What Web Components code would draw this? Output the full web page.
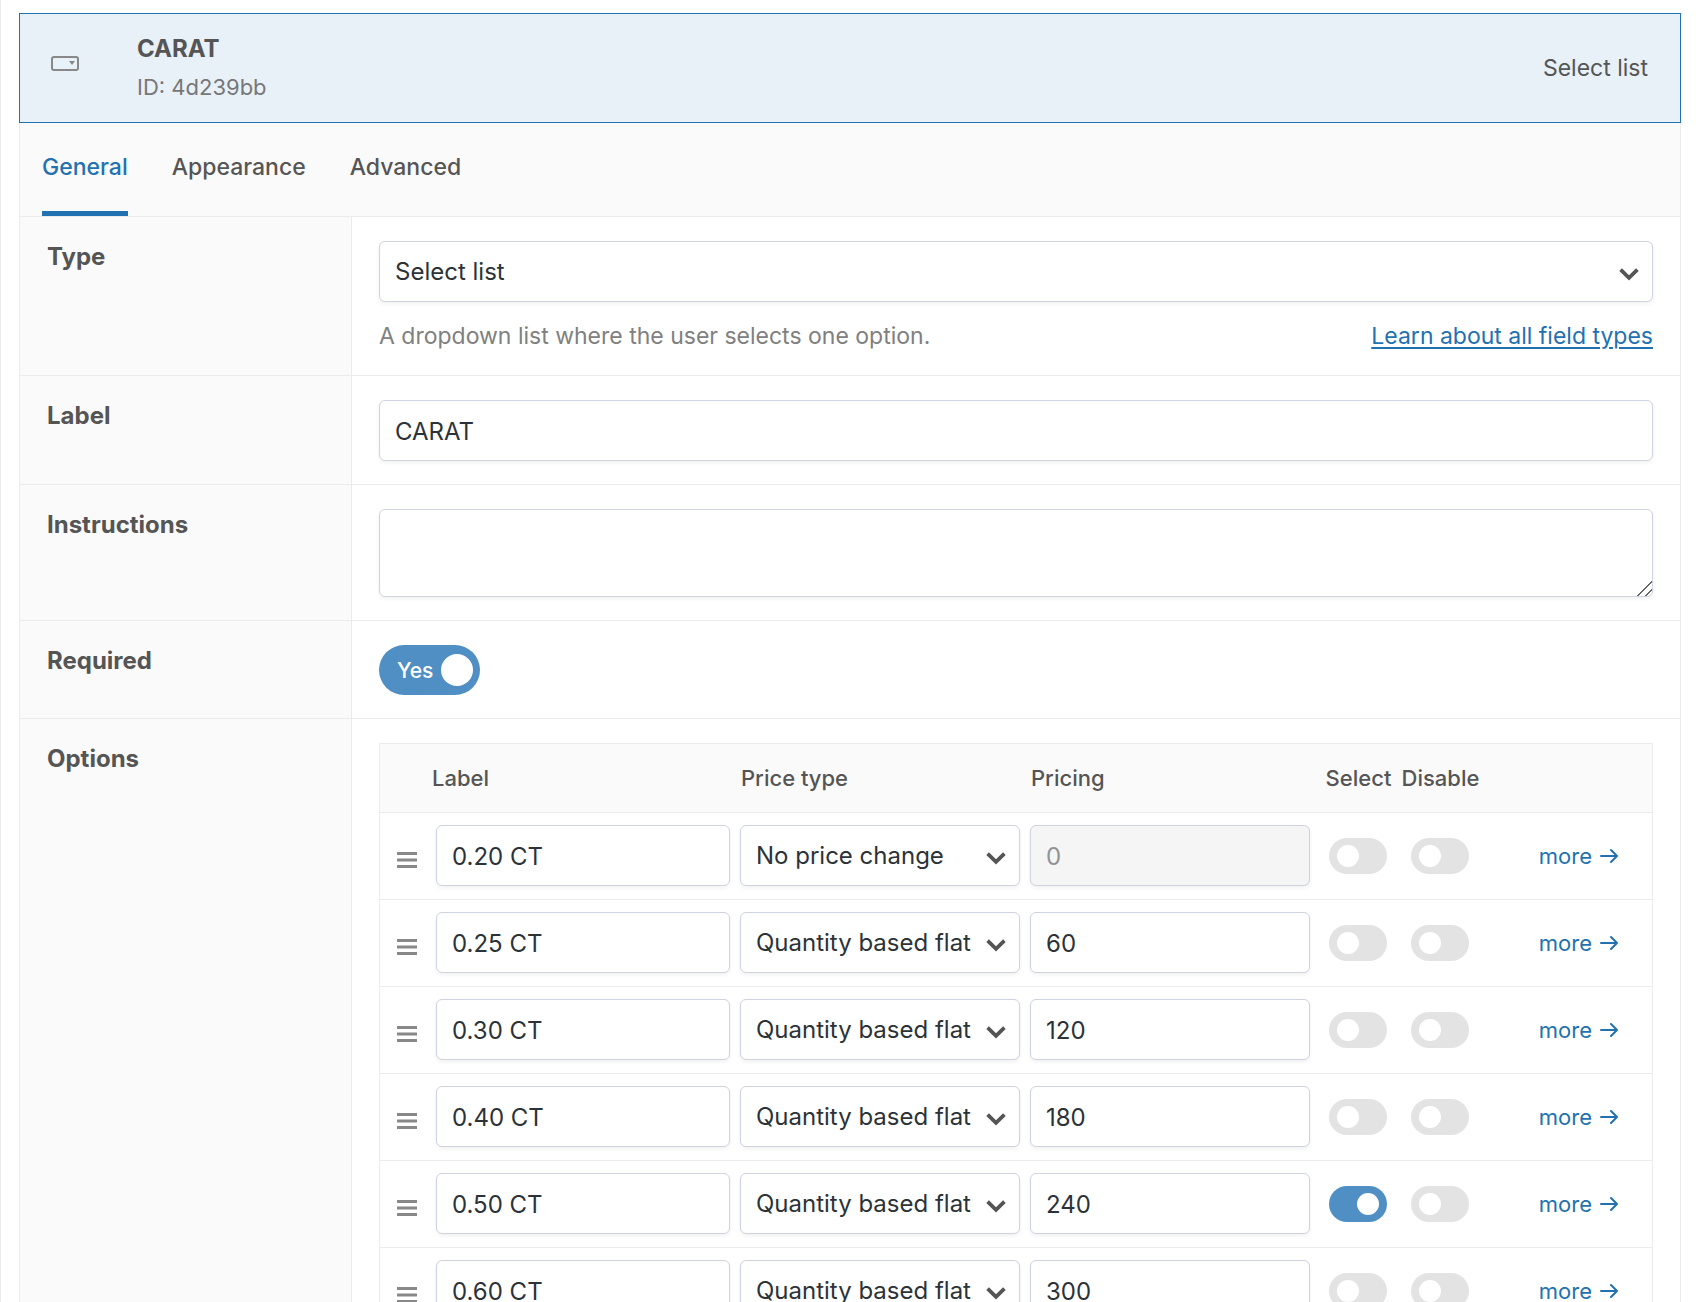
<!DOCTYPE html>
<html lang="en">
<head>
<meta charset="utf-8">
<meta name="viewport" content="width=device-width, initial-scale=1">
<title>Field settings</title>
<style>
  body {
    margin: 0;
    background: #fff;
    color: #555;
    font-family: Inter, "Liberation Sans", sans-serif;
    font-size: 23px;
    line-height: 32px;
  }
</style>
</head>
<body>
<field-editor>
  <field-header slot="header" field-id="4d239bb" type="Select list">CARAT</field-header>
  <field-tabs slot="tabs" items="General,Appearance,Advanced" current="General"></field-tabs>
  <select-setting label="Type" value="Select list">
    A dropdown list where the user selects one option.
    <a slot="link" href="#field-types">Learn about all field types</a>
  </select-setting>
  <text-setting label="Label" value="CARAT"></text-setting>
  <textarea-setting label="Instructions"></textarea-setting>
  <switch-setting label="Required"></switch-setting>
  <options-setting label="Options"></options-setting>
</field-editor>

<script>
// styles shared by every element that holds form controls
const controlStyles = `
  * { box-sizing: border-box; }
  input, select, textarea, button {
    margin: 0;
    font: inherit;
    color: inherit;
  }
  .box {
    display: block;
    width: 100%;
    height: 61px;
    padding: 0 15px;
    border: 1px solid #ced3df;
    border-radius: 6px;
    background: #fff;
    box-shadow: 0 2px 4px rgba(0, 0, 0, .06);
    color: #2c3338;
    font-size: 24px;
    line-height: 32px;
  }
  input.box { padding-top: 2px; }
  .box:disabled {
    background: #f5f5f5;
    color: #8f9396;
    opacity: 1;
  }
  .select { display: grid; }
  .select > * { grid-area: 1 / 1; }
  .select .box {
    appearance: none;
    padding-right: 40px;
  }
  .select svg {
    place-self: center end;
    margin: 4px 10px 0 0;
    pointer-events: none;
  }
  .toggle {
    appearance: none;
    display: block;
    width: 58px;
    height: 36px;
    padding: 7px 8px;
    border-radius: 18px;
    background: #e3e3e3;
  }
  .toggle::before {
    content: "";
    display: block;
    width: 22px;
    height: 22px;
    border-radius: 50%;
    background: #fff;
  }
  .toggle:checked { background: #4f8fc3; }
  .toggle:checked::before { margin-left: auto; }
`;

const selectMarkup = (value, attrs) => `
  <div class="select">
    <select class="box" ${attrs}><option>${value}</option></select>
    <svg width="28" height="28" viewBox="0 0 20 20" aria-hidden="true">
      <path d="M4 6.900l6 5.800 6-5.800" fill="none" stroke="#555" stroke-width="2.700" />
    </svg>
  </div>
`;

class FieldEditor extends HTMLElement {
  constructor() {
    super();
    this.attachShadow({ mode: "open" }).innerHTML = `
      <style>
        :host {
          display: block;
          box-sizing: border-box;
          min-height: 100vh;
          padding: 13px 15px 0 18px;
          border-left: 1px solid #ebebeb;
        }
        .body {
          border: solid #ebebeb;
          border-width: 0 1px;
        }
      </style>
      <slot name="header"></slot>
      <div class="body">
        <slot name="tabs"></slot>
        <slot></slot>
      </div>
    `;
  }
}

class FieldHeader extends HTMLElement {
  connectedCallback() {
    this.attachShadow({ mode: "open" }).innerHTML = `
      <style>
        :host {
          display: grid;
          grid-template-columns: 86px 1fr auto;
          box-sizing: border-box;
          height: 110px;
          padding: 15px 32px 0 31px;
          border: 1px solid #2271b1;
          background: #e8f0f8;
        }
        svg { margin-top: 27px; }
        .name, .id { line-height: 39px; }
        .name {
          font-size: 24px;
          font-weight: 700;
        }
        .id {
          color: #777;
          font-size: 22px;
        }
        .type { line-height: 78px; }
      </style>
      <svg width="28" height="16" viewBox="0 0 28 16" aria-hidden="true">
        <rect x="1" y="1" width="26" height="13" rx="2" fill="none" stroke="#888" stroke-width="2" />
        <path d="M18 5h6l-3 4z" fill="#888" />
      </svg>
      <div>
        <div class="name"><slot></slot></div>
        <div class="id">ID: ${this.getAttribute("field-id")}</div>
      </div>
      <div class="type">${this.getAttribute("type")}</div>
    `;
  }
}

class FieldTabs extends HTMLElement {
  connectedCallback() {
    const current = this.getAttribute("current");
    this.attachShadow({ mode: "open" }).innerHTML = `
      <style>
        :host {
          display: block;
          padding: 0 22px;
          border-bottom: 1px solid #ebebeb;
          background: #fafafa;
        }
        nav { display: flex; gap: 44px; }
        button {
          height: 93px;
          padding: 0;
          border: solid transparent;
          border-width: 0 0 5px;
          background: none;
          color: #555;
          font: inherit;
          font-weight: 500;
        }
        button[aria-selected="true"] {
          border-color: #2271b1;
          color: #2271b1;
        }
      </style>
      <nav role="tablist">
        ${this.getAttribute("items").split(",").map((name) =>
          `<button type="button" role="tab" aria-selected="${name === current}">${name}</button>`
        ).join("")}
      </nav>
    `;
  }
}

/* Label column on the left, a control on the right. Subclasses supply the control. */
class FieldSetting extends HTMLElement {
  connectedCallback() {
    this.attachShadow({ mode: "open" }).innerHTML = `
      <style>
        ${controlStyles}
        :host {
          display: grid;
          grid-template-columns: 332px minmax(0, 1fr);
          border-bottom: 1px solid #ebebeb;
        }
        :host(:last-child) { border-bottom: 0; }
        .title {
          padding: 24px 27px;
          border-right: 1px solid #ebebeb;
          background: #fafafa;
          font-size: 24px;
          font-weight: 700;
        }
        .control { padding: 24px 27px 23px; }
        ${this.styles()}
      </style>
      <div class="title">${this.heading()}</div>
      <div class="control">${this.control()}</div>
    `;
  }

  heading() {
    return `<label for="control">${this.getAttribute("label")}</label>`;
  }

  styles() {
    return "";
  }
}

class SelectSetting extends FieldSetting {
  styles() {
    return `
      .help {
        display: flex;
        justify-content: space-between;
        padding-top: 18px;
        color: #808080;
      }
      ::slotted(a) { color: #2271b1; text-underline-offset: 3px; }
    `;
  }

  control() {
    return `
      ${selectMarkup(this.getAttribute("value"), 'id="control"')}
      <div class="help"><span><slot></slot></span><slot name="link"></slot></div>
    `;
  }
}

class TextSetting extends FieldSetting {
  control() {
    return `<input class="box" id="control" type="text" value="${this.getAttribute("value")}">`;
  }
}

class TextareaSetting extends FieldSetting {
  styles() {
    return `
      textarea.box { height: 88px; resize: vertical; }
      textarea::-webkit-resizer {
        background: linear-gradient(135deg,
          transparent 47%, #666 47%, #666 54%, transparent 54%,
          transparent 76%, #666 76%, #666 83%, transparent 83%);
      }
    `;
  }

  control() {
    return '<textarea class="box" id="control"></textarea>';
  }
}

class SwitchSetting extends FieldSetting {
  styles() {
    return `
      .switch { display: inline-grid; vertical-align: top; }
      .switch > * { grid-area: 1 / 1; }
      .switch span {
        align-self: center;
        padding: 2px 0 0 18px;
        color: #fff;
        font-size: 21px;
        font-weight: 500;
        pointer-events: none;
      }
      .switch .toggle {
        width: 101px;
        height: 50px;
        padding: 9px 7px;
        border-radius: 25px;
      }
      .switch .toggle::before { width: 32px; height: 32px; }
    `;
  }

  control() {
    return `
      <label class="switch">
        <input class="toggle" id="control" type="checkbox" checked>
        <span>Yes</span>
      </label>
    `;
  }
}

class OptionsSetting extends FieldSetting {
  heading() {
    return this.getAttribute("label");
  }

  control() {
    return "<options-table></options-table>";
  }
}

const OPTIONS = [
  { label: "0.20 CT", type: "No price change", price: 0, free: true },
  { label: "0.25 CT", type: "Quantity based flat", price: 60 },
  { label: "0.30 CT", type: "Quantity based flat", price: 120 },
  { label: "0.40 CT", type: "Quantity based flat", price: 180 },
  { label: "0.50 CT", type: "Quantity based flat", price: 240, selected: true },
  { label: "0.60 CT", type: "Quantity based flat", price: 300 }
];

class OptionsTable extends HTMLElement {
  connectedCallback() {
    this.attachShadow({ mode: "open" }).innerHTML = `
      <style>
        ${controlStyles}
        :host {
          display: block;
          border: 1px solid #ebebeb;
          border-bottom: 0;
          font-size: 22px;
        }
        table {
          width: 100%;
          table-layout: fixed;
          border-collapse: separate;
          border-spacing: 0;
        }
        .grip { width: 51px; }
        .wide { width: 290px; }
        .select-col { width: 76px; }
        .disable-col { width: 88px; }
        .more-col { width: 168px; }
        th {
          height: 69px;
          padding: 0 0 0 1px;
          border-bottom: 1px solid #ebebeb;
          background: #fafafa;
          font-weight: 500;
          text-align: left;
        }
        td {
          height: 87px;
          padding: 12px 10px 13px 0;
          border-bottom: 1px solid #ebebeb;
          vertical-align: top;
        }
        td:nth-child(2) { padding-left: 5px; }
        td:first-child { padding: 39px 0 0 17px; }
        th:nth-child(5), th:nth-child(6) { text-align: center; }
        td:nth-child(5), td:nth-child(6) { padding: 25px 0 0; }
        td .toggle { margin: 0 auto; }
        td:last-child { padding: 27px 34px 0 0; text-align: right; }
        .handle {
          display: block;
          padding: 0;
          border: 0;
          background: none;
        }
        svg { display: block; }
        a {
          display: inline-flex;
          align-items: center;
          gap: 8px;
          color: #2271b1;
          text-decoration: none;
        }
      </style>
      <table>
        <thead>
          <tr>
            <th class="grip"></th>
            <th>Label</th>
            <th class="wide">Price type</th>
            <th class="wide">Pricing</th>
            <th class="select-col">Select</th>
            <th class="disable-col">Disable</th>
            <th class="more-col"></th>
          </tr>
        </thead>
        <tbody>${OPTIONS.map(this.row).join("")}</tbody>
      </table>
    `;
  }

  row(option) {
    return `
      <tr>
        <td>
          <button class="handle" type="button" aria-label="Move ${option.label}">
            <svg width="20" height="16" viewBox="0 0 20 16" fill="#888">
              <rect width="20" height="3" /><rect y="6.500" width="20" height="3" /><rect y="13" width="20" height="3" />
            </svg>
          </button>
        </td>
        <td><input class="box" type="text" value="${option.label}" aria-label="Label"></td>
        <td>${selectMarkup(option.type, 'aria-label="Price type"')}</td>
        <td><input class="box" type="text" value="${option.price}" aria-label="Pricing" ${option.free ? "disabled" : ""}></td>
        <td><input class="toggle" type="checkbox" aria-label="Select" ${option.selected ? "checked" : ""}></td>
        <td><input class="toggle" type="checkbox" aria-label="Disable"></td>
        <td>
          <a href="#more">more
            <svg width="18" height="18" viewBox="0 0 18 18" fill="none" stroke="#2271b1" stroke-width="2" stroke-linecap="round" stroke-linejoin="round" aria-hidden="true">
              <path d="M1 9h16M11 3l6 6-6 6" />
            </svg>
          </a>
        </td>
      </tr>
    `;
  }
}

customElements.define("options-table", OptionsTable);
customElements.define("field-header", FieldHeader);
customElements.define("field-tabs", FieldTabs);
customElements.define("select-setting", SelectSetting);
customElements.define("text-setting", TextSetting);
customElements.define("textarea-setting", TextareaSetting);
customElements.define("switch-setting", SwitchSetting);
customElements.define("options-setting", OptionsSetting);
customElements.define("field-editor", FieldEditor);
</script>
</body>
</html>
